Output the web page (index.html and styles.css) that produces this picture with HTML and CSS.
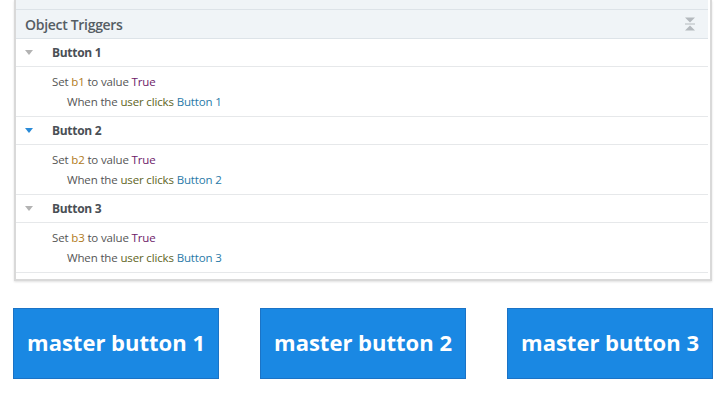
FILE: index.html
```html
<!DOCTYPE html>
<html lang="en">

<head>
    <meta charset="utf-8" />
    <title>object triggers</title>
    <link rel="stylesheet" href="styles.css">
</head>

<body>
  <div class="panel">
    <div class="panelTop"></div>
    <div class="panelHead">
      <span>Object Triggers</span>
      <svg class="collapseAll" width="10" height="14" viewBox="0 0 10 14">
        <path d="M0 0.5h10L5 5.5z" fill="#b4b9be" />
        <rect x="0" y="6.5" width="10" height="1" fill="#b4b9be" />
        <path d="M0 13.5h10L5 8.5z" fill="#b4b9be" />
      </svg>
    </div>

    <div class="triggerRow">
      <span class="caret"></span>Button 1
    </div>
    <div class="triggerBody">
      <p>Set <span class="var">b1</span> to value <span class="val">True</span></p>
      <p class="when">When the <span class="who">user clicks</span> <span class="obj">Button 1</span></p>
    </div>

    <div class="triggerRow">
      <span class="caret active"></span>Button 2
    </div>
    <div class="triggerBody">
      <p>Set <span class="var">b2</span> to value <span class="val">True</span></p>
      <p class="when">When the <span class="who">user clicks</span> <span class="obj">Button 2</span></p>
    </div>

    <div class="triggerRow">
      <span class="caret"></span>Button 3
    </div>
    <div class="triggerBody">
      <p>Set <span class="var">b3</span> to value <span class="val">True</span></p>
      <p class="when">When the <span class="who">user clicks</span> <span class="obj">Button 3</span></p>
    </div>
  </div>

  <div class="masters">
    <button class="master">master button 1</button>
    <button class="master">master button 2</button>
    <button class="master">master button 3</button>
  </div>
</body>

</html>
```

FILE: styles.css
```css
/*
  colors:
    panel bg      #f0f4f7
    lines         #e3e6e9
    blue          #1a88e3
 */
body {
  margin: 0;
  background-color: #fff;
  font-family: "Open Sans", "Noto Sans", sans-serif;
}

div.panel {
  width: 692px;
  margin-left: 14px;
  padding-right: 2px;
  padding-bottom: 6px;
  border: 2px solid #d9d9d9;
  border-top: none;
  box-shadow: 0 1px 2px rgba(0, 0, 0, 0.12);
  background-color: #fff;
}

div.panelTop {
  height: 9px;
  background-color: #f0f4f7;
  border-bottom: 1px solid #dde3e8;
}

div.panelHead {
  height: 28px;
  display: flex;
  align-items: center;
  justify-content: space-between;
  padding: 0 13px 0 9px;
  background-color: #f0f4f7;
  border-bottom: 1px solid #dde3e8;
  color: #555d64;
  font-size: 14px;
  font-weight: 600;
  letter-spacing: -0.3px;
}

div.triggerRow {
  height: 27px;
  display: flex;
  align-items: center;
  padding-left: 9px;
  border-bottom: 1px solid #e6e8ea;
  color: #4a4f55;
  font-size: 12px;
  font-weight: bold;
  letter-spacing: -0.3px;
}

span.caret {
  width: 0;
  height: 0;
  margin-right: 19px;
  border-left: 4px solid transparent;
  border-right: 4px solid transparent;
  border-top: 5px solid #b3b3b3;
}

span.caret.active {
  border-top-color: #2a8bd8;
}

div.triggerBody {
  height: 44px;
  padding: 5px 0 0 36px;
  border-bottom: 1px solid #e6e8ea;
  color: #555;
  font-size: 11.5px;
  letter-spacing: -0.15px;
}

div.triggerBody p {
  margin: 0;
  line-height: 20px;
}

p.when {
  padding-left: 15px;
}

span.var {
  color: #b07a1c;
}

span.val {
  color: #6d1a68;
}

span.who {
  color: #5e6423;
}

span.obj {
  color: #2a7aa8;
}

div.masters {
  display: flex;
  justify-content: space-between;
  width: 700px;
  margin: 27px 0 0 13px;
}

button.master {
  width: 206px;
  height: 71px;
  border: 1px solid #1b73c6;
  background-color: #1a88e3;
  color: #fff;
  font-family: "Open Sans", sans-serif;
  font-size: 22px;
  font-weight: bold;
  padding: 0 0 4px;
}
```
